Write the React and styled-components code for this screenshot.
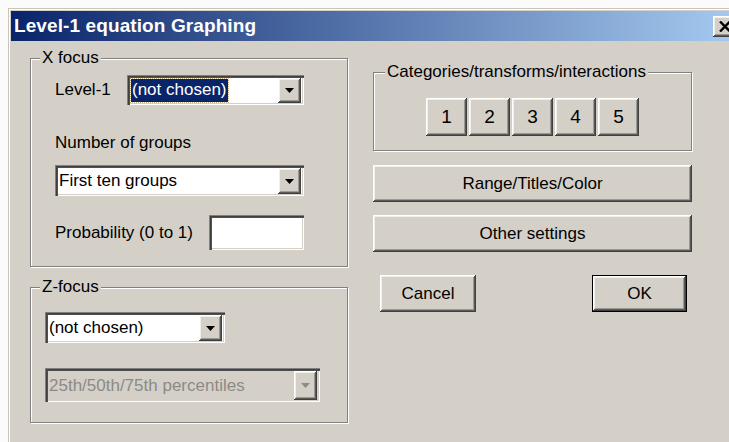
import React from "react";
import styled, { createGlobalStyle, css } from "styled-components";

const GlobalStyle = createGlobalStyle`
  html, body {
    margin: 0;
    padding: 0;
    background: #ffffff;
    overflow: hidden;
  }
  body {
    font-family: "Liberation Sans", Arial, sans-serif;
  }
`;

const FACE = "#d4d0c8";

const raised = css`
  background: ${FACE};
  box-shadow: inset -1px -1px 0 #404040, inset 1px 1px 0 #ffffff,
    inset -2px -2px 0 #5a5a5a, inset 2px 2px 0 #f1efea,
    inset -3px -3px 0 #9a9892;
`;

const sunken = css`
  box-shadow: inset 1px 1px 0 #808080, inset 2px 2px 0 #404040,
    inset 3px 3px 0 #505050, inset -1px -1px 0 #ffffff,
    inset -2px -2px 0 ${FACE};
`;

const Screen = styled.div`
  width: 729px;
  height: 442px;
  overflow: hidden;
  box-sizing: border-box;
  padding: 8px 0 0 8px;
  background: #fbfbfb;
`;

const Window = styled.div`
  width: 733px;
  height: 470px;
  box-sizing: border-box;
  padding: 3px 3px 0 3px;
  background: ${FACE};
  box-shadow: inset 1px 1px 0 #c8c5bd, inset 2px 2px 0 #ffffff;
  display: flex;
  flex-direction: column;
`;

const TitleBar = styled.div`
  height: 30px;
  flex: none;
  display: flex;
  align-items: center;
  padding: 0 2px 0 3px;
  background: linear-gradient(to right, #0a246a 0%, #a6caf0 100%);
`;

const TitleText = styled.span`
  color: #ffffff;
  font-weight: bold;
  font-size: 19px;
  letter-spacing: 0.1px;
`;

const CloseButton = styled.button`
  ${raised};
  margin-left: auto;
  width: 23px;
  height: 21px;
  border: none;
  padding: 0;
  display: flex;
  align-items: center;
  justify-content: center;
`;

const Body = styled.div`
  display: flex;
  align-items: flex-start;
  gap: 25px;
  padding: 9px 0 0 19px;
`;

const Column = styled.div`
  width: ${(p) => p.$w}px;
  display: flex;
  flex-direction: column;
  gap: ${(p) => p.$gap || 0}px;
  margin-top: ${(p) => p.$top || 0}px;
`;

const GroupBox = styled.fieldset`
  margin: 0;
  padding: 0;
  min-inline-size: 0;
  border: 1px solid #808080;
  box-shadow: inset 1px 1px 0 #ffffff, 1px 1px 0 #ffffff;
`;

const GroupLabel = styled.legend`
  margin-left: ${(p) => p.$indent}px;
  padding: 0 2px;
  height: 16px;
  font-size: 17px;
  line-height: 16px;
  color: #000000;
  background: ${FACE};
`;

const GroupBody = styled.div`
  display: flex;
  flex-direction: column;
  align-items: ${(p) => p.$align || "flex-start"};
  padding: ${(p) => p.$pad};
`;

const Row = styled.div`
  display: flex;
  align-items: center;
  margin-top: ${(p) => p.$top || 0}px;
`;

const Label = styled.span`
  display: block;
  width: ${(p) => (p.$w ? `${p.$w}px` : "auto")};
  margin-top: ${(p) => p.$top || 0}px;
  font-size: 17px;
  line-height: 20px;
  color: #000000;
  white-space: nowrap;
`;

const ComboFrame = styled.div`
  ${sunken};
  display: flex;
  align-items: stretch;
  box-sizing: border-box;
  width: ${(p) => p.$w}px;
  height: ${(p) => p.$h}px;
  margin-top: ${(p) => p.$top || 0}px;
  padding: 3px 3px 2px 3px;
  background: ${(p) => (p.$disabled ? FACE : "#ffffff")};
`;

const ComboValue = styled.div`
  flex: 1;
  display: flex;
  align-items: center;
  padding-left: 1px;
  font-size: 17px;
  color: ${(p) => (p.$disabled ? "#8c8a85" : "#000000")};
  white-space: nowrap;
  overflow: hidden;
`;

const Selection = styled.span`
  background: #0a246a;
  color: #ffffff;
  padding: 1px 1px 2px 1px;
  outline: 1px dotted #c0b080;
`;

const DropButton = styled.div`
  ${raised};
  width: 23px;
  flex: none;
  display: flex;
  align-items: center;
  justify-content: center;
`;

const TextBox = styled.div`
  ${sunken};
  width: ${(p) => p.$w}px;
  height: ${(p) => p.$h}px;
  background: #ffffff;
`;

const PushButton = styled.button`
  ${raised};
  box-sizing: border-box;
  width: ${(p) => (p.$w ? `${p.$w}px` : "100%")};
  height: ${(p) => p.$h}px;
  margin-top: ${(p) => p.$top || 0}px;
  padding: 0;
  border: ${(p) => (p.$default ? "1px solid #000000" : "none")};
  font-family: "Liberation Sans", Arial, sans-serif;
  font-size: ${(p) => p.$size || 17}px;
  color: #000000;
  display: flex;
  align-items: center;
  justify-content: center;
`;

const NumberRow = styled.div`
  display: flex;
  gap: 2px;
`;

const ActionRow = styled.div`
  display: flex;
  justify-content: space-between;
  padding: 0 5px 0 7px;
  margin-top: 23px;
`;

const Arrow = ({ color = "#000000" }) => (
  <svg width="9" height="5" viewBox="0 0 9 5" aria-hidden="true">
    <polygon points="0,0 9,0 4.5,5" fill={color} />
  </svg>
);

const Combo = ({ w, h, top, disabled, children }) => (
  <ComboFrame $w={w} $h={h} $top={top} $disabled={disabled}>
    <ComboValue $disabled={disabled}>{children}</ComboValue>
    <DropButton>
      <Arrow color={disabled ? "#8c8a85" : "#000000"} />
    </DropButton>
  </ComboFrame>
);

export default function App() {
  return (
    <>
      <GlobalStyle />
      <Screen>
        <Window>
          <TitleBar>
            <TitleText>Level-1 equation Graphing</TitleText>
            <CloseButton aria-label="Close">
              <svg width="12" height="11" viewBox="0 0 12 11" aria-hidden="true">
                <path d="M1 0.5 L11 10.5 M11 0.5 L1 10.5" stroke="#000" strokeWidth="2.4" />
              </svg>
            </CloseButton>
          </TitleBar>

          <Body>
            <Column $w={318} $gap={12}>
              <GroupBox>
                <GroupLabel $indent={9}>X focus</GroupLabel>
                <GroupBody $pad="9px 0 16px 24px">
                  <Row>
                    <Label $w={72}>Level-1</Label>
                    <Combo w={177} h={30}>
                      <Selection>(not chosen)</Selection>
                    </Combo>
                  </Row>
                  <Label $top={28}>Number of groups</Label>
                  <Combo w={249} h={31} top={12}>
                    First ten groups
                  </Combo>
                  <Row $top={19}>
                    <Label $w={154}>Probability (0 to 1)</Label>
                    <TextBox $w={95} $h={35} />
                  </Row>
                </GroupBody>
              </GroupBox>

              <GroupBox>
                <GroupLabel $indent={9}>Z-focus</GroupLabel>
                <GroupBody $pad="17px 0 20px 14px">
                  <Combo w={180} h={31}>
                    (not chosen)
                  </Combo>
                  <Combo w={275} h={34} top={25} disabled>
                    25th/50th/75th percentiles
                  </Combo>
                </GroupBody>
              </GroupBox>
            </Column>

            <Column $w={319} $top={14}>
              <GroupBox>
                <GroupLabel $indent={11}>Categories/transforms/interactions</GroupLabel>
                <GroupBody $pad="18px 0 14px 0" $align="center">
                  <NumberRow>
                    {["1", "2", "3", "4", "5"].map((n) => (
                      <PushButton key={n} $w={41} $h={38} $size={19}>
                        {n}
                      </PushButton>
                    ))}
                  </NumberRow>
                </GroupBody>
              </GroupBox>
              <PushButton $h={37} $top={14}>
                Range/Titles/Color
              </PushButton>
              <PushButton $h={37} $top={13}>
                Other settings
              </PushButton>
              <ActionRow>
                <PushButton $w={96} $h={37}>
                  Cancel
                </PushButton>
                <PushButton $w={95} $h={37} $default>
                  OK
                </PushButton>
              </ActionRow>
            </Column>
          </Body>
        </Window>
      </Screen>
    </>
  );
}
